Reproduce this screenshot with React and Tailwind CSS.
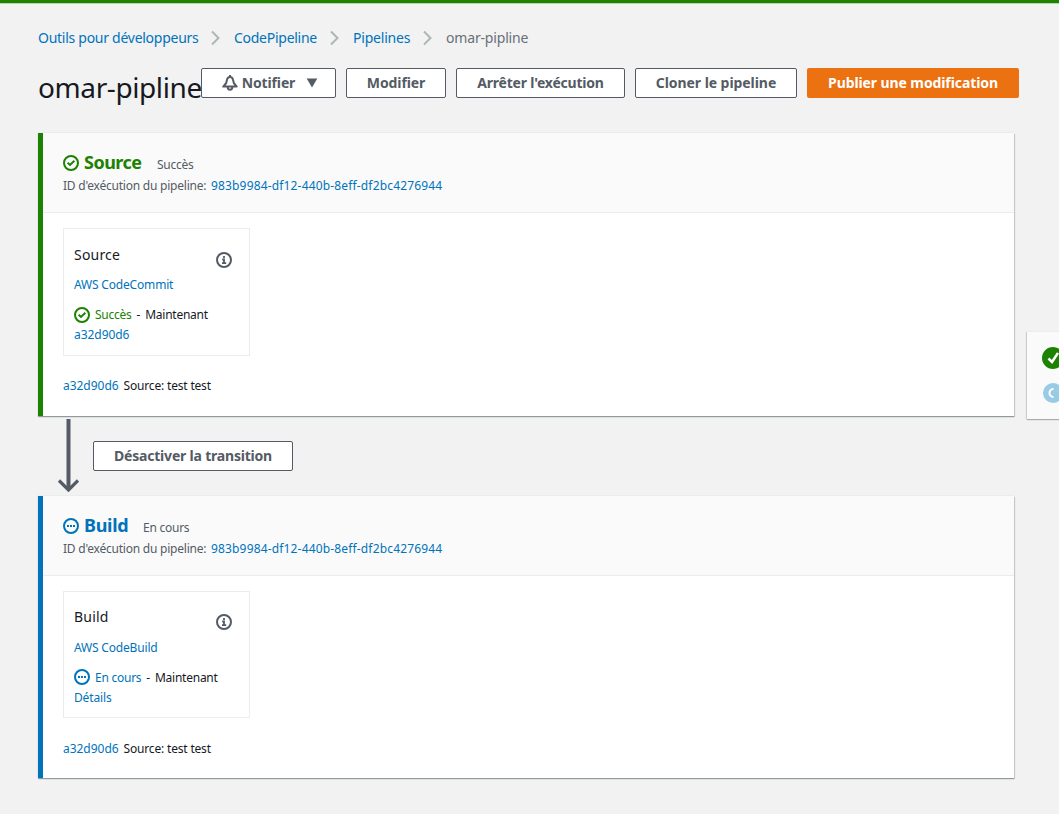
import React from "react";

const Chevron = () => (
  <svg className="mx-3 h-4 w-3 shrink-0" viewBox="0 0 12 16" fill="none" stroke="#aab7b8" strokeWidth="2">
    <path d="M2 1.5 L8.5 8 L2 14.5" />
  </svg>
);

const Check = () => (
  <svg className="h-4 w-4 shrink-0" viewBox="0 0 16 16" fill="none" stroke="currentColor" strokeWidth="2">
    <circle cx="8" cy="8" r="7" />
    <path d="M4.6 7.8 L7 10 L11.4 5.8" />
  </svg>
);

const Dots = () => (
  <svg className="h-4 w-4 shrink-0" viewBox="0 0 16 16" fill="none" stroke="currentColor" strokeWidth="2">
    <circle cx="8" cy="8" r="7" />
    <path d="M4 8h2M7 8h2M10 8h2" />
  </svg>
);

const Info = () => (
  <svg className="h-4 w-4 shrink-0 text-[#545b64]" viewBox="0 0 16 16" fill="none" stroke="currentColor" strokeWidth="2">
    <circle cx="8" cy="8" r="7" />
    <path d="M8 4v2M6.2 7.5H8V11M6 11.2h4.2" strokeWidth="1.8" />
  </svg>
);

const Bell = () => (
  <svg className="mt-0.5 h-4 w-4 shrink-0" viewBox="0 0 16 16" fill="none" stroke="currentColor" strokeWidth="2" strokeLinejoin="round">
    <path d="M8 0v2M8 2C6 2 5.2 3.3 4.9 5L4.2 8L1.3 11.6h13.4L11.8 8L11.1 5C10.800 3.300 10 2 8 2z" />
    <path d="M5.700 12c0 3.700 4.600 3.700 4.600 0" />
  </svg>
);

const btn =
  "flex h-[30px] shrink-0 items-center justify-center whitespace-nowrap rounded-[2px] border border-[#545b64] bg-white pb-0.5 text-[14px] font-bold text-[#545b64]";

function Stage({ name, status, provider, link, running }) {
  const color = running ? "text-[#0073bb]" : "text-[#1d8102]";
  const Icon = running ? Dots : Check;
  return (
    <section
      className={
        (running ? "h-[282px] border-[#0073bb] " : "h-[283px] border-[#1d8102] ") +
        "ml-[38px] w-[976px] border-l-[5px] bg-white shadow-[0_1px_1px_0_rgba(0,28,36,0.3),1px_1px_1px_0_rgba(0,28,36,0.15),0_-1px_0_0_#eaeded]"
      }
    >
      <header className="h-[80px] border-b border-[#eaeded] bg-[#fafafa] pl-5 pt-[18px]">
        <div className={"flex h-6 items-center " + color}>
          <Icon />
          <h2 className={"-mt-0.5 ml-[5px] text-[18px] font-bold leading-6 " + (running ? "w-[59px] tracking-[-0.3px]" : "w-[73px] tracking-[-0.5px]")}>{name}</h2>
          <span className="mt-[3px] text-[12px] tracking-[-0.25px] text-[#545b64]">{status}</span>
        </div>
        <div className="mt-px flex h-5 items-center whitespace-nowrap text-[12px]">
          <span className="w-[148px] tracking-[-0.22px] text-[#545b64]">ID d'exécution du pipeline:</span>
          <span className="tracking-[0.16px] text-[#0073bb]">983b9984-df12-440b-8eff-df2bc4276944</span>
        </div>
      </header>
      <div className="pl-5 pt-[15px]">
        <div className={"w-[187px] border border-[#eaeded] pl-[10px] pr-[17px] text-[12px] " + (running ? "h-[127px] pt-[15px]" : "h-[128px] pt-4")}>
          <div className="flex h-5 items-start justify-between">
            <h3 className="text-[14px] leading-5 tracking-[0.2px] text-[#16191f]">{name}</h3>
            <span className="mt-[7px]"><Info /></span>
          </div>
          <div className={"h-5 leading-5 tracking-[-0.18px] text-[#0073bb] " + (running ? "mt-[11px]" : "mt-[10px]")}>{provider}</div>
          <div className="mt-[10px] flex h-5 items-center whitespace-nowrap tracking-[-0.25px] text-[#16191f]">
            <span className={"flex items-center gap-[5px] " + color}>
              <span className={running ? "-mt-0.5" : ""}><Icon /></span>
              {status}
            </span>
            <span className="mx-[5px]">-</span>
            <span>Maintenant</span>
          </div>
          <div className={"h-5 leading-5 text-[#0073bb] " + (running ? "tracking-[-0.15px]" : "tracking-[-0.05px]")}>{link}</div>
        </div>
        <div className={"flex h-5 items-center gap-[5px] text-[12px] text-[#16191f] " + (running ? "mt-[21px]" : "mt-5")}>
          <span className="tracking-[-0.03px] text-[#0073bb]">a32d90d6</span>
          <span className="tracking-[-0.18px]">Source: test test</span>
        </div>
      </div>
    </section>
  );
}

export default function App() {
  return (
    <div className="relative h-[814px] w-[1059px] overflow-hidden bg-[#f2f2f2] font-['Noto_Sans',sans-serif]">
      <div className="h-1 border-b border-[#b9d3b5] bg-[#1d8102]" />
      <nav className="flex h-[68px] items-center whitespace-nowrap pl-[38px] text-[14px] text-[#0073bb]">
        <span className="-mt-0.5 w-[160px] tracking-[-0.27px]">Outils pour développeurs</span>
        <Chevron />
        <span className="-mt-0.5 w-[83px] tracking-[-0.27px]">CodePipeline</span>
        <Chevron />
        <span className="-mt-0.5 w-[57px] tracking-[-0.2px]">Pipelines</span>
        <Chevron />
        <span className="-mt-0.5 tracking-[-0.17px] text-[#687078]">omar-pipline</span>
      </nav>
      <div className="-mt-1 flex h-[65px] pl-[38px]">
        <h1 className="-mt-px h-10 w-[163px] shrink-0 whitespace-nowrap text-[28px] leading-10 tracking-[-0.4px] text-[#16191f]">omar-pipline</h1>
        <div className="flex gap-[10px]">
          <button className={btn + " w-[135px] pl-0.5"}>
            <Bell />
            <span className="ml-1 w-[54px] tracking-[-0.15px]">Notifier</span>
            <svg className="ml-[10px] mt-0.5 h-[10px] w-3" viewBox="0 0 12 10" fill="currentColor"><path d="M.7.6h10.600L6 9.600z" /></svg>
          </button>
          <button className={btn + " w-[100px] tracking-[-0.1px]"}>Modifier</button>
          <button className={btn + " w-[169px] tracking-[-0.2px]"}>Arrêter l'exécution</button>
          <button className={btn + " w-[162px] tracking-[-0.06px]"}>Cloner le pipeline</button>
          <button className="flex h-[30px] w-[212px] items-center justify-center whitespace-nowrap rounded-[2px] bg-[#ec7211] pb-0.5 text-[14px] font-bold tracking-[-0.1px] text-white">Publier une modification</button>
        </div>
      </div>
      <Stage name="Source" status="Succès" provider="AWS CodeCommit" link="a32d90d6" />
      <div className="flex h-[80px] items-start pl-[57px]">
        <svg className="mt-[3px] h-[73px] w-[22px] shrink-0" viewBox="0 0 22 73" fill="none" stroke="#545b64">
          <path d="M11.500 0v70" strokeWidth="4" />
          <path d="M2 61.500l9.500 9.500 9.500-9.500" strokeWidth="3.200" />
        </svg>
        <button className={btn + " ml-[14px] mt-[25px] w-[200px] tracking-[-0.2px]"}>Désactiver la transition</button>
      </div>
      <Stage running name="Build" status="En cours" provider="AWS CodeBuild" link="Détails" />
      <aside className="absolute left-[1027px] top-[332px] flex h-[87px] w-[80px] flex-col gap-[14px] bg-[#fafafa] pl-[15px] pt-[15px] shadow-[0_1px_1px_0_rgba(0,28,36,0.3),-1px_0_1px_0_rgba(0,28,36,0.12)]">
        <svg className="h-[22px] w-[22px] shrink-0" viewBox="0 0 22 22" fill="none">
          <circle cx="11" cy="11" r="11" fill="#1d8102" />
          <path d="M6.500 11.500l3.500 3.500 6-9" stroke="white" strokeWidth="2.500" />
        </svg>
        <svg className="ml-px h-5 w-5 shrink-0" viewBox="0 0 20 20" fill="none">
          <circle cx="10" cy="10" r="10" fill="#99cbe4" />
          <path d="M10.500 6a4 4 0 1 0 0 8" stroke="white" strokeWidth="2" />
        </svg>
      </aside>
    </div>
  );
}
